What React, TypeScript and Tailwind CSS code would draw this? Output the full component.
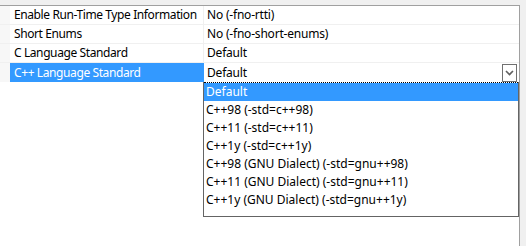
import React from "react";

const rows = [
  { name: "Enable Run-Time Type Information", value: "No (-fno-rtti)" },
  { name: "Short Enums", value: "No (-fno-short-enums)" },
  { name: "C Language Standard", value: "Default" },
];

const items = [
  "Default",
  "C++98 (-std=c++98)",
  "C++11 (-std=c++11)",
  "C++1y (-std=c++1y)",
  "C++98 (GNU Dialect) (-std=gnu++98)",
  "C++11 (GNU Dialect) (-std=gnu++11)",
  "C++1y (GNU Dialect) (-std=gnu++1y)",
];

export default function App() {
  return (
    <div
      className="w-[526px] h-[246px] bg-[#f0f0f0] pt-[5px] overflow-hidden text-[12px] text-black"
      style={{ fontFamily: '"Noto Sans", "Open Sans", sans-serif' }}
    >
      <div className="relative w-[520px] h-[241px] bg-white border-t border-r border-[#a0a0a0]">
        {rows.map((r) => (
          <div key={r.name} className="flex h-[19px] border-b border-[#f0f0f0]">
            <div className="w-[10px] bg-[#f7f7f7]" />
            <div className="w-[193px] pl-[4px] flex items-center whitespace-nowrap leading-none tracking-[-0.4px]">{r.name}</div>
            <div className="w-px bg-[#f0f0f0]" />
            <div className="flex-1 pl-[3px] flex items-center whitespace-nowrap leading-none tracking-[-0.2px]">{r.value}</div>
          </div>
        ))}
        <div className="flex h-[19px]">
          <div className="w-[10px] bg-[#f7f7f7]" />
          <div className="w-[193px] pl-[4px] flex items-center bg-[#3399ff] text-white whitespace-nowrap leading-none tracking-[-0.4px]">
            C++ Language Standard
          </div>
          <div className="w-px bg-[#3399ff]" />
          <div className="flex-1 pl-[3px] pr-[2px] flex items-center justify-between leading-none tracking-[-0.2px]">
            <span>Default</span>
            <div className="w-[15px] h-[18px] border border-[#707070] flex items-center justify-center bg-white">
              <svg width="9" height="6" viewBox="0 0 9 6">
                <path d="M1 1 L4.5 4.5 L8 1" fill="none" stroke="#606060" strokeWidth="1.6" />
              </svg>
            </div>
          </div>
        </div>

        <div className="absolute left-[203px] top-[76px] w-[316px] h-[135px] bg-white border border-[#646464] border-t-0">
          <div className="h-px w-full border-t border-dotted border-black" />
          {items.map((it, i) => (
            <div
              key={it}
              className={
                "h-[18px] pl-[2px] flex items-center whitespace-nowrap leading-none " +
                (i === 0 ? "bg-[#3399ff] text-white" : "")
              }
            >
              {it}
            </div>
          ))}
        </div>
      </div>
    </div>
  );
}
